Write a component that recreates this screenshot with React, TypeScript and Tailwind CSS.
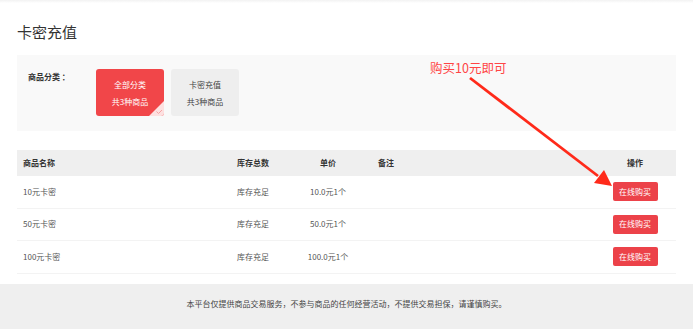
const rows = [
  { name: "10元卡密", stock: "库存充足", price: "10.0元1个" },
  { name: "50元卡密", stock: "库存充足", price: "50.0元1个" },
  { name: "100元卡密", stock: "库存充足", price: "100.0元1个" },
];

const cols = "grid grid-cols-[214px_69px_56px_1fr_82px] items-center";

export default function App() {
  return (
    <div
      className="relative h-[329px] w-[693px] overflow-hidden bg-white text-[#555]"
      style={{ fontFamily: '"Noto Sans CJK SC", "Noto Sans", sans-serif' }}
    >
      <div className="h-[3px] bg-gradient-to-b from-[#f2f2f2] to-white" />

      <div className="px-[17px]">
        <h1 className="mt-[20px] text-[15px] leading-[18px] text-[#333]">卡密充值</h1>

        {/* category filter */}
        <div className="mt-[14px] flex h-[76px] bg-[#f9f9f9] pl-[11px] pt-[14px]">
          <span className="w-[68px] pt-[2px] text-[8px] font-bold leading-[12px] text-[#333]">
            商品分类 ：
          </span>
          <div className="flex gap-[7px]">
            <div className="relative flex h-[47px] w-[68px] flex-col items-center justify-center gap-[6px] overflow-hidden rounded-[3px] bg-[#f14649] text-[8px] leading-[11px] text-white">
              <span>全部分类</span>
              <span>共3种商品</span>
              <svg className="absolute bottom-0 right-0" width="15" height="15" viewBox="0 0 15 15">
                <path d="M15 0 L15 15 L0 15 Z" fill="#fde0e0" />
                <path d="M7.5 10.5 L9.5 12.5 L13 9" fill="none" stroke="#f5a3a3" strokeWidth="1" />
              </svg>
            </div>
            <div className="flex h-[47px] w-[68px] flex-col items-center justify-center gap-[6px] rounded-[3px] bg-[#eeeeee] text-[8px] leading-[11px] text-[#444]">
              <span>卡密充值</span>
              <span>共3种商品</span>
            </div>
          </div>
        </div>

        {/* table */}
        <div className="mt-[19px] text-[8px]">
          <div className={`${cols} h-[26px] bg-[#efefef] font-bold text-[#333]`}>
            <span className="pl-[6px]">商品名称</span>
            <span className="pl-[6px]">库存总数</span>
            <span className="text-center">单价</span>
            <span className="pl-[22px]">备注</span>
            <span className="text-center">操作</span>
          </div>
          {rows.map((r) => (
            <div key={r.name} className={`${cols} h-[32.5px] border-b border-[#f3f3f3]`}>
              <span className="pl-[6px]">{r.name}</span>
              <span className="pl-[6px]">{r.stock}</span>
              <span className="text-center">{r.price}</span>
              <span />
              <span className="flex justify-center">
                <button className="h-[19px] w-[45px] rounded-[2px] bg-[#ec4249] text-[8px] text-white">
                  在线购买
                </button>
              </span>
            </div>
          ))}
        </div>
      </div>

      <div className="mt-[10px] flex h-[46px] items-start justify-center bg-[#efefef] pt-[14px] text-[8px] text-[#444]">
        本平台仅提供商品交易服务，不参与商品的任何经营活动，不提供交易担保，请谨慎购买。
      </div>

      {/* annotation */}
      <span className="absolute left-[430px] top-[59px] text-[12.5px] leading-[18px] text-[#ff4545]">
        购买10元即可
      </span>
      <svg className="pointer-events-none absolute left-0 top-0" width="693" height="329">
        <line x1="470" y1="78" x2="598" y2="176" stroke="#ff2a1a" strokeWidth="2.8" />
        <path d="M612 186 L594 183 L604 170 Z" fill="#ff2a1a" />
      </svg>
    </div>
  );
}
